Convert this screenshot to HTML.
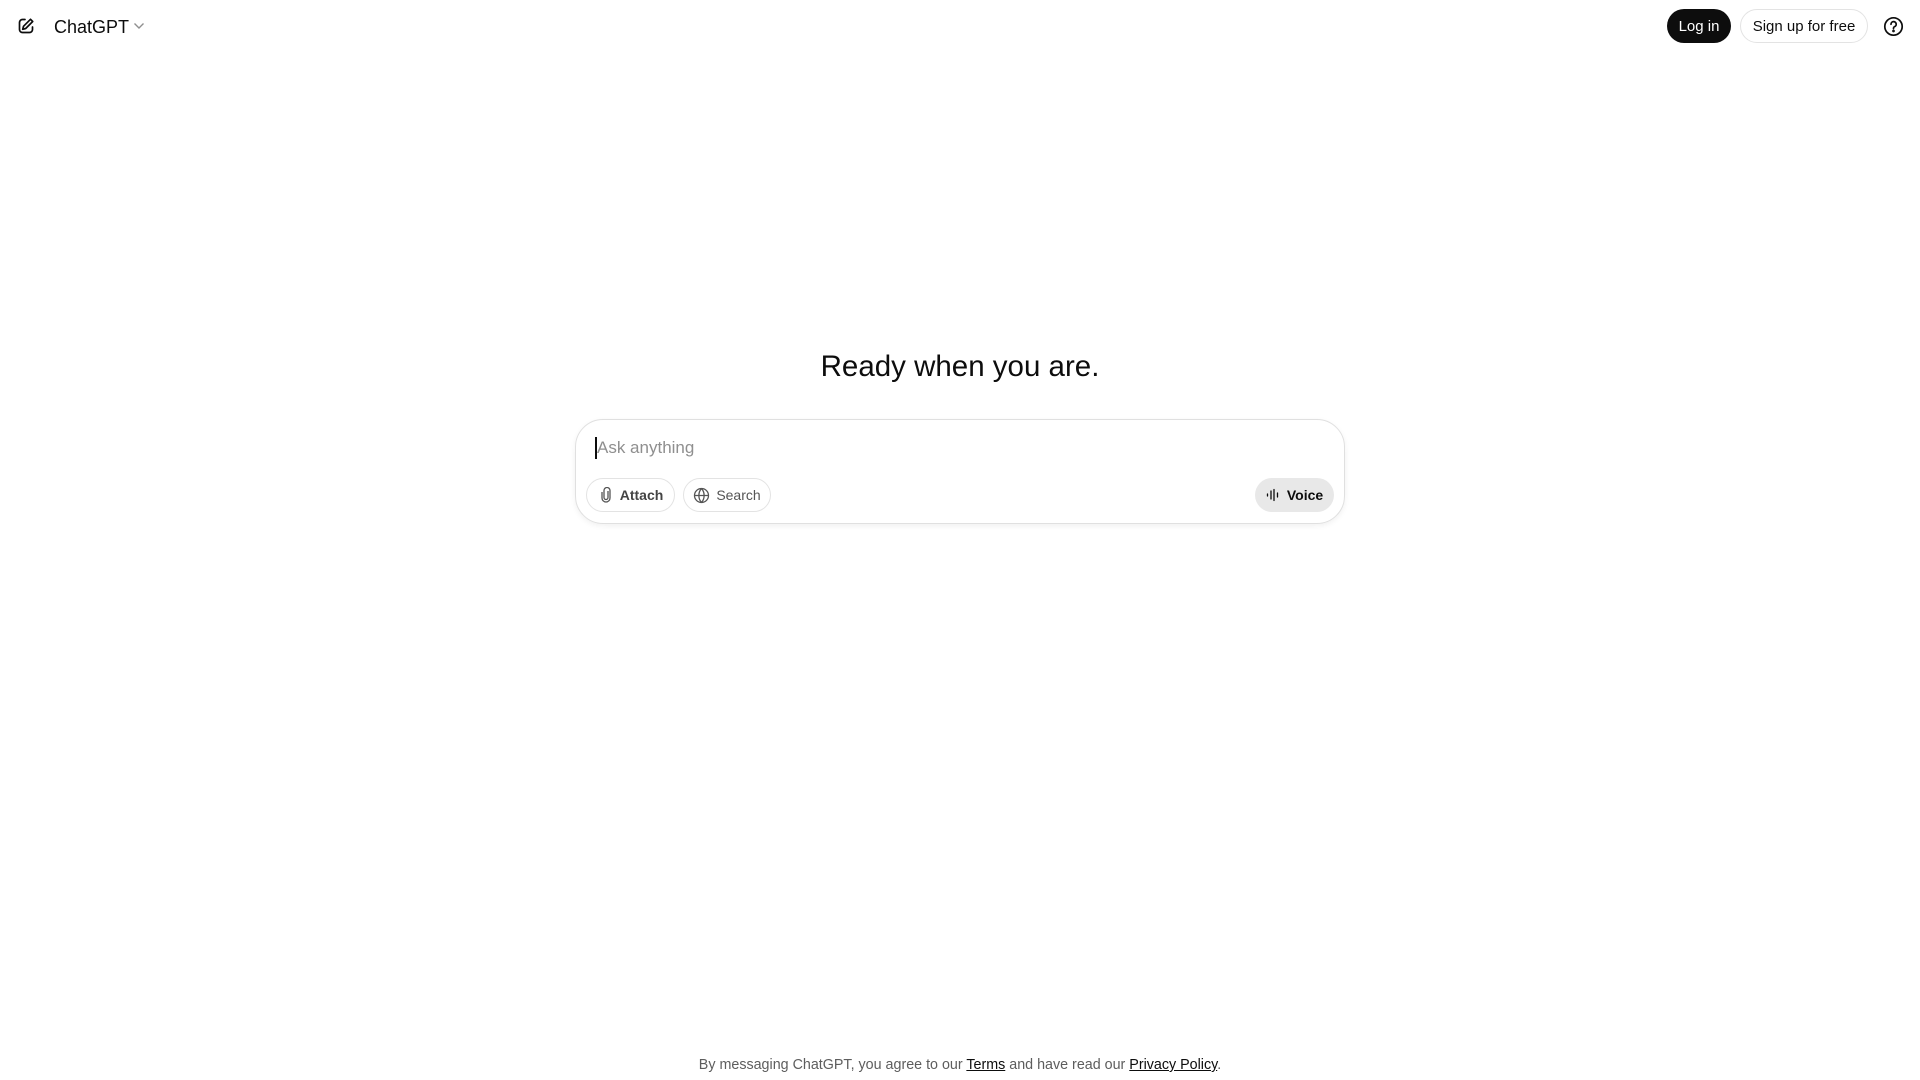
<!DOCTYPE html>
<html><head><meta charset="utf-8"><style>
*{margin:0;padding:0;box-sizing:border-box}
body{width:1920px;height:1080px;background:#fff;font-family:"Liberation Sans","DejaVu Sans",sans-serif;color:#0d0d0d;position:relative;overflow:hidden}
.abs{position:absolute}
.btn{position:absolute;display:flex;align-items:center;justify-content:center;border-radius:999px;font-size:15px}
</style></head><body>
<svg class="abs" style="left:17px;top:17px" width="18" height="18" viewBox="0 0 18 18" fill="none" stroke="#0d0d0d" stroke-width="1.7" stroke-linecap="round" stroke-linejoin="round"><path d="M8 2.5H5.5a3 3 0 0 0-3 3v7a3 3 0 0 0 3 3h7a3 3 0 0 0 3-3V10"/><path d="M13.5 2.3l2.2 2.2-7 7-3 .8.8-3z"/></svg>
<div class="abs" style="left:54px;top:14px;font-size:18px;line-height:26px">ChatGPT</div>
<svg class="abs" style="left:133px;top:22px" width="12" height="8" viewBox="0 0 12 8" fill="none" stroke="#8f8f8f" stroke-width="1.4"><path d="M1.5 1.5l4.5 4.5 4.5-4.5"/></svg>
<div class="btn" style="left:1667px;top:9px;width:64px;height:34px;background:#0d0d0d;color:#fff">Log in</div>
<div class="btn" style="left:1740px;top:9px;width:128px;height:34px;border:1px solid #e3e3e3">Sign up for free</div>
<svg class="abs" style="left:1883px;top:16px" width="21" height="21" viewBox="0 0 21 21" fill="none" stroke="#0d0d0d" stroke-width="1.7" stroke-linecap="round"><circle cx="10.5" cy="10.5" r="8.7"/><path d="M8 8.3a2.6 2.6 0 1 1 3.4 2.4c-.6.3-.9.8-.9 1.5v.4"/><circle cx="10.5" cy="15" r=".5" fill="#0d0d0d"/></svg>
<div class="abs" style="left:0;width:1920px;top:347px;text-align:center;font-size:29.5px;line-height:40px">Ready when you are.</div>
<div class="abs" style="left:575px;top:419px;width:770px;height:105px;border:1px solid #e0e0e0;border-radius:28px;box-shadow:0 2px 6px rgba(0,0,0,.06)"></div>
<div class="abs" style="left:595px;top:437px;width:1.5px;height:22px;background:#0d0d0d"></div>
<div class="abs" style="left:597px;top:437px;font-size:17px;line-height:22px;color:#8f8f8f">Ask anything</div>
<div class="btn" style="left:586px;top:478px;width:89px;height:34px;border:1px solid #e3e3e3;font-size:14px;font-weight:bold;color:#444">
<svg width="16" height="16" viewBox="0 0 16 16" fill="none" stroke="#555" stroke-width="1.3" style="margin-right:6px"><path d="M10 4v6.5a2 2 0 0 1-4 0V3.5a3 3 0 0 1 6 0V11a4 4 0 0 1-8 0V5"/></svg>Attach</div>
<div class="btn" style="left:683px;top:478px;width:88px;height:34px;border:1px solid #e3e3e3;font-size:14px;color:#555">
<svg width="17" height="17" viewBox="0 0 17 17" fill="none" stroke="#555" stroke-width="1.3" style="margin-right:6px"><circle cx="8.5" cy="8.5" r="7"/><path d="M1.5 8.5h14M8.5 1.5c-3.5 3.8-3.5 10.2 0 14M8.5 1.5c3.5 3.8 3.5 10.2 0 14"/></svg>Search</div>
<div class="btn" style="left:1255px;top:478px;width:79px;height:34px;background:#e8e8e8;font-size:14px;font-weight:bold">
<svg width="15" height="14" viewBox="0 0 15 14" fill="none" stroke="#0d0d0d" stroke-width="1.3" stroke-linecap="round" style="margin-right:6px"><path d="M1.5 6v2M5 3v8M8 1.5v11M11.5 5v4"/></svg>Voice</div>
<div class="abs" style="left:0;width:1920px;top:1055px;text-align:center;font-size:14.3px;line-height:20px;color:#5d5d5d">By messaging ChatGPT, you agree to our <span style="color:#0d0d0d;text-decoration:underline">Terms</span> and have read our <span style="color:#0d0d0d;text-decoration:underline">Privacy Policy</span>.</div>
</body></html>
